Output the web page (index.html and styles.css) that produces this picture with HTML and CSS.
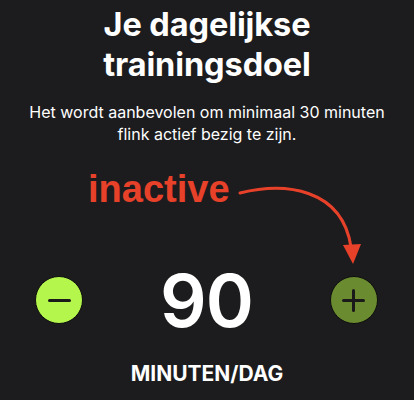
FILE: index.html
```html
<!DOCTYPE html>
<html lang="nl">
<head>
<meta charset="utf-8">
<title>Je dagelijkse trainingsdoel</title>
<link rel="stylesheet" href="styles.css">
</head>
<body>
<main class="screen">
  <h1 class="title">Je dagelijkse<br>trainingsdoel</h1>
  <p class="subtitle">Het wordt aanbevolen om minimaal 30 minuten<br>flink actief bezig te zijn.</p>
  <div class="annotation">inactive</div>
  <div class="stepper">
    <button class="step step-minus" aria-label="Minder">
      <span class="bar"></span>
    </button>
    <div class="value">90</div>
    <button class="step step-plus" aria-label="Meer">
      <span class="bar"></span>
      <span class="bar bar-v"></span>
    </button>
  </div>
  <div class="unit">MINUTEN/DAG</div>
  <svg class="arrow" width="414" height="400" viewBox="0 0 414 400" aria-hidden="true">
    <path d="M240 193 C285 182 342 188 351 247" fill="none" stroke="#e8412a" stroke-width="3" stroke-linecap="round"/>
    <path d="M343 245 L361 244 L353 264 Z" fill="#e8412a"/>
  </svg>
</main>
</body>
</html>
```

FILE: styles.css
```css
html, body {
  margin: 0;
  padding: 0;
  background: #1c1c1e;
}

.screen {
  position: relative;
  width: 414px;
  height: 400px;
  overflow: hidden;
  display: flex;
  flex-direction: column;
  color: #ffffff;
  font-family: Inter, "Liberation Sans", sans-serif;
}

.title {
  margin: 5px 0 0;
  font-size: 32.5px;
  line-height: 40px;
  font-weight: 700;
  text-align: center;
  letter-spacing: -0.1px;
}

.subtitle {
  margin: 16px 0 0;
  font-size: 16px;
  line-height: 22px;
  font-weight: 400;
  text-align: center;
}

.annotation {
  margin: 24px 0 0;
  padding-left: 88px;
  font-family: "Liberation Sans", Arial, sans-serif;
  font-size: 38px;
  line-height: 40px;
  font-weight: 700;
  color: #e8412a;
}

.stepper {
  margin-top: 67px;
  display: flex;
  align-items: center;
  justify-content: space-between;
  padding: 0 36px 0 35px;
  height: 48px;
}

.step {
  position: relative;
  width: 48px;
  height: 48px;
  padding: 0;
  border-radius: 50%;
  border: 1.5px solid #0e0e0e;
  display: flex;
  align-items: center;
  justify-content: center;
  box-sizing: border-box;
}

.step-minus {
  background: #b5f64d;
}

.step-plus {
  background: #6a8b2f;
}

.bar {
  display: block;
  width: 23px;
  height: 3px;
  border-radius: 2px;
  background: #1a1a1a;
}

.bar-v {
  position: absolute;
  width: 3px;
  height: 23px;
}

.value {
  font-size: 73px;
  line-height: 73px;
  font-weight: 600;
  letter-spacing: -1px;
}

.unit {
  margin-top: 37px;
  font-size: 21px;
  line-height: 26px;
  font-weight: 700;
  text-align: center;
}

.arrow {
  position: absolute;
  top: 0;
  left: 0;
  pointer-events: none;
}
```
